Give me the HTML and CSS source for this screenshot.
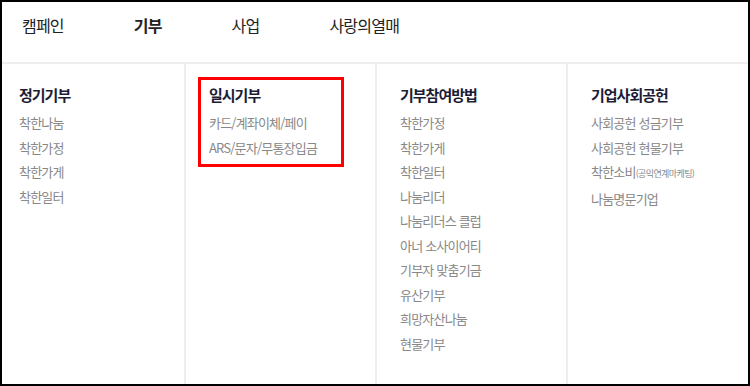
FILE: index.html
```html
<!DOCTYPE html>
<html lang="ko">
<head>
    <meta charset="UTF-8">
    <meta name="viewport" content="width=device-width, initial-scale=1.0">
    <title>기부 메뉴</title>
    <link rel="stylesheet" href="styles.css">
</head>
<body>
    <div class="frame">
        <nav class="gnb">
            <a href="#">캠페인</a>
            <a href="#" class="active">기부</a>
            <a href="#">사업</a>
            <a href="#">사랑의열매</a>
        </nav>

        <div class="mega">
            <div class="col">
                <h3>정기기부</h3>
                <ul>
                    <li>착한나눔</li>
                    <li>착한가정</li>
                    <li>착한가게</li>
                    <li>착한일터</li>
                </ul>
            </div>
            <div class="col">
                <h3>일시기부</h3>
                <ul>
                    <li>카드/계좌이체/페이</li>
                    <li>ARS/문자/무통장입금</li>
                </ul>
            </div>
            <div class="col">
                <h3>기부참여방법</h3>
                <ul>
                    <li>착한가정</li>
                    <li>착한가게</li>
                    <li>착한일터</li>
                    <li>나눔리더</li>
                    <li>나눔리더스 클럽</li>
                    <li>아너 소사이어티</li>
                    <li>기부자 맞춤기금</li>
                    <li>유산기부</li>
                    <li>희망자산나눔</li>
                    <li>현물기부</li>
                </ul>
            </div>
            <div class="col">
                <h3>기업사회공헌</h3>
                <ul>
                    <li>사회공헌 성금기부</li>
                    <li>사회공헌 현물기부</li>
                    <li>착한소비<small>(공익연계마케팅)</small></li>
                    <li>나눔명문기업</li>
                </ul>
            </div>
        </div>

        <!-- highlight box -->
        <div class="highlight"></div>
    </div>
</body>
</html>
```

FILE: styles.css
```css
* {
    box-sizing: border-box;
}
body {
    margin: 0;
    font-family: "Noto Sans CJK KR", "Noto Sans", sans-serif;
    background: #fff;
}
.frame {
    position: relative;
    width: 750px;
    height: 386px;
    border: 2px solid #000;
    overflow: hidden;
    display: flex;
    flex-direction: column;
}
.gnb {
    display: flex;
    gap: 70px;
    height: 62px;
    padding: 11px 0 0 20px;
    border-bottom: 2px solid #eeeeee;
}
.gnb a {
    color: #222;
    text-decoration: none;
    font-size: 16px;
    letter-spacing: -0.8px;
    line-height: 24px;
    height: 24px;
}
.gnb a.active {
    font-weight: bold;
}
.mega {
    flex: 1;
    display: grid;
    grid-template-columns: 182px 191px 191px 1fr;
}
.col {
    padding: 21px 0 0 23px;
    border-left: 2px solid #eeeeee;
}
.col:first-child {
    border-left: none;
    padding-left: 17px;
}
.col h3 {
    margin: 0 0 6px;
    font-size: 15px;
    letter-spacing: -1px;
    line-height: 20px;
    font-weight: bold;
    color: #1c1c36;
}
.col ul {
    list-style: none;
    margin: 0;
    padding: 0;
}
.col li {
    font-size: 13px;
    letter-spacing: -0.8px;
    line-height: 24.5px;
    color: #888;
}
.col li small {
    font-size: 9px;
    letter-spacing: -0.6px;
}
.highlight {
    position: absolute;
    left: 196px;
    top: 75px;
    width: 146px;
    height: 90px;
    border: 3px solid #ff0000;
}
```
